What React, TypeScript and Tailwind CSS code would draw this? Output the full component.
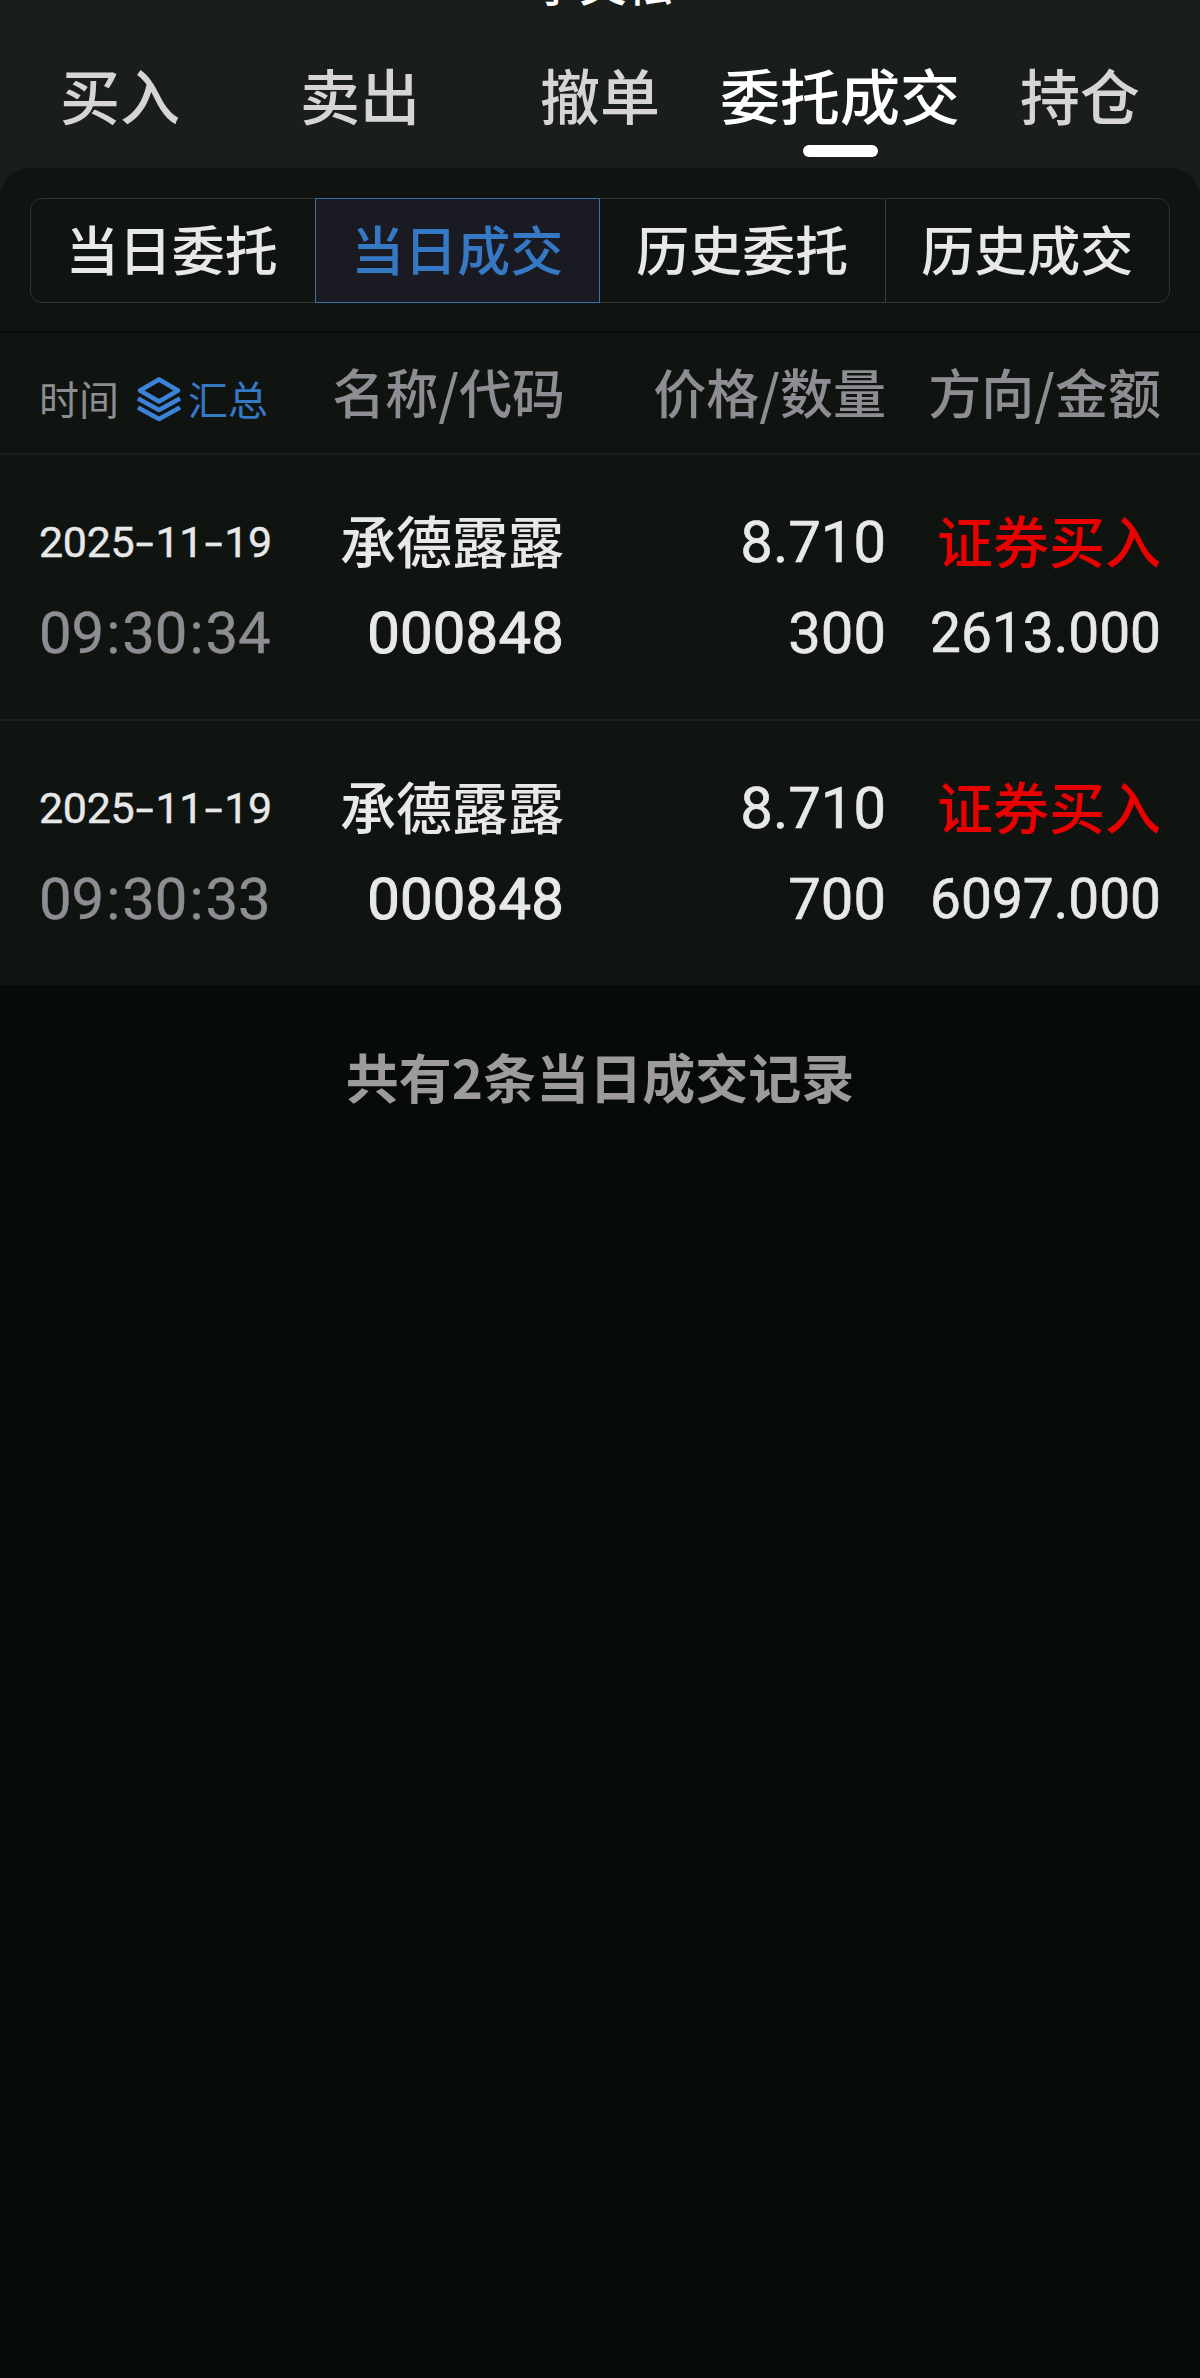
import React from 'react';

interface Trade {
  date: string;
  time: string;
  name: string;
  code: string;
  price: string;
  quantity: string;
  direction: string;
  amount: string;
}

const TABS = ['买入', '卖出', '撤单', '委托成交', '持仓'];
const SEGMENTS = ['当日委托', '当日成交', '历史委托', '历史成交'];

const TRADES: Trade[] = [
  {
    date: '2025-11-19',
    time: '09:30:34',
    name: '承德露露',
    code: '000848',
    price: '8.710',
    quantity: '300',
    direction: '证券买入',
    amount: '2613.000',
  },
  {
    date: '2025-11-19',
    time: '09:30:33',
    name: '承德露露',
    code: '000848',
    price: '8.710',
    quantity: '700',
    direction: '证券买入',
    amount: '6097.000',
  },
];

function LayersIcon() {
  return (
    <svg
      className="w-[46px] h-[46px] shrink-0"
      viewBox="0 0 46 46"
      fill="none"
      stroke="#3b82d8"
      strokeWidth="4.5"
      strokeLinecap="butt"
      strokeLinejoin="round"
    >
      <path d="M23 3.5 L42 14.5 L23 25.5 L4 14.5 Z" />
      <path d="M2 22.5 L23 34 L44 22.5" />
      <path d="M2 31.5 L23 43 L44 31.5" />
    </svg>
  );
}

function TradeDate({ value }: { value: string }) {
  return (
    <>
      {value.split('-').map((part, idx) => (
        <React.Fragment key={idx}>
          {idx > 0 && <span className="inline-block w-[21px] scale-x-150 text-center">-</span>}
          {part}
        </React.Fragment>
      ))}
    </>
  );
}

function TradeTime({ value }: { value: string }) {
  return (
    <>
      {value.split(':').map((part, idx) => (
        <React.Fragment key={idx}>
          {idx > 0 && <span className="inline-block w-[18px] text-center">:</span>}
          {part}
        </React.Fragment>
      ))}
    </>
  );
}

function TradeRow({ trade }: { trade: Trade }) {
  return (
    <div className="grid grid-cols-[233px_292px_322px_275px] h-[266px] pl-[39px] pt-[45px] border-t-2 border-[#1c201d] text-[#e8e8e8] whitespace-nowrap">
      <div className="flex flex-col font-[Roboto,sans-serif] [-webkit-text-stroke:0.4px]">
        <span className="h-[90px] leading-[84px] text-[43px] tracking-[-0.3px]">
          <TradeDate value={trade.date} />
        </span>
        <span className="h-[90px] leading-[86px] text-[58px] text-[#8e8d93]">
          <TradeTime value={trade.time} />
        </span>
      </div>
      <div className="flex flex-col items-end">
        <span className="h-[90px] leading-[78px] text-[56px] font-medium">{trade.name}</span>
        <span className="h-[90px] leading-[86px] text-[58px] tracking-[0.2px] font-[Roboto,sans-serif] [-webkit-text-stroke:1px]">
          {trade.code}
        </span>
      </div>
      <div className="flex flex-col items-end font-[Roboto,sans-serif] [-webkit-text-stroke:0.6px]">
        <span className="h-[90px] leading-[84px] text-[58px]">{trade.price}</span>
        <span className="h-[90px] leading-[86px] text-[58px]">{trade.quantity}</span>
      </div>
      <div className="flex flex-col items-end">
        <span className="h-[90px] leading-[78px] text-[56px] font-medium text-[#e90000]">{trade.direction}</span>
        <span className="h-[90px] leading-[86px] text-[55px] font-[Roboto,sans-serif] [-webkit-text-stroke:0.6px]">
          {trade.amount}
        </span>
      </div>
    </div>
  );
}

export default function App() {
  return (
    <div className="w-[1200px] h-[2378px] overflow-hidden bg-[#070b08] font-['Noto_Sans_CJK_SC',sans-serif]">
      {/* Top bar */}
      <div className="bg-[#1a1e1b]">
        <div className="h-[30px] flex justify-center items-end">
          <div className="h-[70px] pl-1.5 leading-[66px] text-[47px] font-medium text-white -translate-y-[12px]">李文松</div>
        </div>
        <div className="h-[138px] grid grid-cols-5">
          {TABS.map(tab => (
            <div key={tab} className="flex flex-col items-center">
              <span
                className={`h-[115px] leading-[128px] text-[60px] font-medium whitespace-nowrap ${
                  tab === '委托成交' ? 'text-white' : 'text-[#d7d4d8]'
                }`}
              >
                {tab}
              </span>
              {tab === '委托成交' && <span className="w-[75px] h-[12px] rounded-full bg-white" />}
            </div>
          ))}
        </div>
        <div className="h-[32px] rounded-t-[30px] bg-[#101411]" />
      </div>

      {/* Panel */}
      <div className="bg-[#101411]">
        <div className="h-[135px] px-[30px] -mt-0.5 border-b-2 border-[#080b09]">
          <div className="grid grid-cols-4 h-[105px] rounded-[12px] border border-[#303331]">
            {SEGMENTS.map((label, idx) => (
              <div
                key={label}
                className={`flex items-center justify-center pb-[4px] text-[53px] leading-none font-medium whitespace-nowrap ${
                  idx === 1
                    ? '-my-px -ml-px border border-[#3a6ea8] bg-[#191a22] text-[#3578c4]'
                    : idx === 3
                      ? 'border-l border-[#3a3d3b] text-[#e8e8e8]'
                      : idx === 0
                        ? 'pr-[3px] text-[#e8e8e8]'
                        : 'text-[#e8e8e8]'
                }`}
              >
                {label}
              </div>
            ))}
          </div>
        </div>

        {/* Column titles */}
        <div className="grid grid-cols-[234px_292px_321px_275px] h-[120px] pl-[39px] text-[53px] leading-[117px] text-[#8e8d93] font-medium whitespace-nowrap">
          <div className="flex items-center pt-[7px] text-[40px] font-normal">
            <span>时间</span>
            <span className="ml-[17px] flex items-center text-[#3578c4]">
              <LayersIcon />
              <span className="ml-1.5">汇总</span>
            </span>
          </div>
          <div className="text-right">名称/代码</div>
          <div className="text-right">价格/数量</div>
          <div className="text-right">方向/金额</div>
        </div>

        {TRADES.map(trade => (
          <TradeRow key={trade.time} trade={trade} />
        ))}
      </div>

      {/* Summary */}
      <div className="pt-[51px] text-center text-[53px] leading-[80px] font-bold text-[#9d9a9d]">
        共有2条当日成交记录
      </div>
    </div>
  );
}
